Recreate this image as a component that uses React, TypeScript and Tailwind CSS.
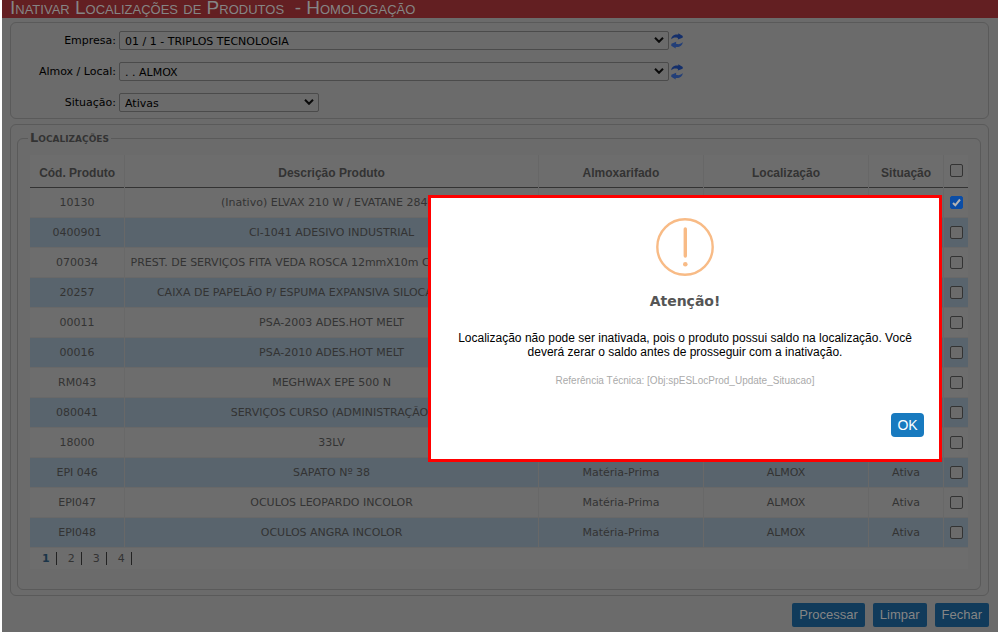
import * as React from "react"
import { clsx } from "clsx"

const products = [
  { code: "10130", name: "(Inativo) ELVAX 210 W / EVATANE 2840B", checked: true },
  { code: "0400901", name: "CI-1041 ADESIVO INDUSTRIAL" },
  { code: "070034", name: "PREST. DE SERVIÇOS FITA VEDA ROSCA 12mmX10m COR BRANCA 50 UN" },
  { code: "20257", name: "CAIXA DE PAPELÃO P/ ESPUMA EXPANSIVA SILOCAV COM 12 UN" },
  { code: "00011", name: "PSA-2003 ADES.HOT MELT" },
  { code: "00016", name: "PSA-2010 ADES.HOT MELT" },
  { code: "RM043", name: "MEGHWAX EPE 500 N" },
  { code: "080041", name: "SERVIÇOS CURSO (ADMINISTRAÇÃO)" },
  { code: "18000", name: "33LV" },
  { code: "EPI 046", name: "SAPATO Nº 38" },
  { code: "EPI047", name: "OCULOS LEOPARDO INCOLOR" },
  { code: "EPI048", name: "OCULOS ANGRA INCOLOR" },
]

const columns = ["Cód. Produto", "Descrição Produto", "Almoxarifado", "Localização", "Situação"]
const pages = ["1", "2", "3", "4"]
const actions = ["Processar", "Limpar", "Fechar"]

function RefreshIcon() {
  return (
    <svg viewBox="0 0 12 16" className="block h-4 w-3" aria-hidden="true">
      <path d="M0.3 6.2C0.4 3 3.2 1.2 7.4 1.6L7.2 0.2 11.8 3 11.6 4.8 6.8 6.6 7 4.9C4.2 4 2 4.4 0.3 6.2Z" fill="#142f6b" />
      <path d="M11.7 9C11.5 12.6 8.8 14.4 4.6 14L4.8 15.6 0.2 12.8 0.4 10.8 5.2 8.8 5 10.8C7.8 11.6 10 11 11.7 9Z" fill="#233f78" />
    </svg>
  )
}

function SelectField({
  id,
  label,
  value,
  className,
  refresh,
}: {
  id: string
  label: string
  value: string
  className: string
  refresh?: boolean
}) {
  return (
    <div className="flex items-center">
      <label htmlFor={id} className="w-[108px] pt-[2px] pr-[3px] text-right">
        {label}
      </label>
      <div className={clsx("relative", className)}>
        <select
          id={id}
          className="block h-[19px] w-full appearance-none rounded-xs border border-[#4b4b4b] bg-[#6b6b6b] pt-[2px] pr-5 pl-[5px] text-black"
        >
          <option>{value}</option>
        </select>
        <svg viewBox="0 0 10 6" className="pointer-events-none absolute top-[6px] right-[5px] h-[6px] w-[10px]" aria-hidden="true">
          <path d="M1 0.8 5 4.8 9 0.8" fill="none" stroke="#0a0a0a" strokeWidth="2" />
        </svg>
      </div>
      {refresh && (
        <button type="button" aria-label={`Atualizar ${label}`} className="ml-[2px]">
          <RefreshIcon />
        </button>
      )}
    </div>
  )
}

function Check({ label, checked }: { label: string; checked?: boolean }) {
  return (
    <span className="relative mx-auto block size-[13px]">
      <input
        type="checkbox"
        aria-label={label}
        defaultChecked={checked}
        className="peer block size-[13px] appearance-none rounded-xs border border-[#333333] bg-[#6b6b6b] checked:border-[#0b4da6] checked:bg-[#0b4da6]"
      />
      <svg viewBox="0 0 13 13" className="pointer-events-none absolute inset-0 hidden size-[13px] peer-checked:block" aria-hidden="true">
        <path d="M3 7 5.3 9.3 10 3.5" fill="none" stroke="#b4b4b4" strokeWidth="2" />
      </svg>
    </span>
  )
}

function ProductTable() {
  return (
    <table className="w-full table-fixed border-collapse text-center text-[#333333]">
      <colgroup>
        <col className="w-[10.1%]" />
        <col className="w-[44.1%]" />
        <col className="w-[17.6%]" />
        <col className="w-[17.6%]" />
        <col className="w-[8%]" />
        <col className="w-[2.6%]" />
      </colgroup>
      <thead>
        <tr className="h-8 border-b border-[#333333] font-['Liberation_Sans',sans-serif] text-xs">
          {columns.map((column) => (
            <th key={column} className="border-r border-r-[#676767] pt-[5px] font-bold">
              {column}
            </th>
          ))}
          <th>
            <Check label="Selecionar todos" />
          </th>
        </tr>
      </thead>
      <tbody>
        {products.map((product) => (
          <tr key={product.code} className="h-[30px] border-b border-[#686868] whitespace-nowrap even:bg-[#59646d]">
            <td className="border-r border-[#686868] pt-[2px]">{product.code}</td>
            <td className="overflow-hidden border-r border-[#686868] pt-[2px]">{product.name}</td>
            <td className="border-r border-[#686868] pt-[2px]">Matéria-Prima</td>
            <td className="border-r border-[#686868] pt-[2px]">ALMOX</td>
            <td className="border-r border-[#686868] pt-[2px]">Ativa</td>
            <td>
              <Check label={`Selecionar ${product.code}`} checked={product.checked} />
            </td>
          </tr>
        ))}
      </tbody>
    </table>
  )
}

function Alert({ onClose }: { onClose: () => void }) {
  return (
    <div
      role="alertdialog"
      aria-labelledby="alert-title"
      className="absolute top-[195px] right-14 w-[514px] border-3 border-[#ff0000] bg-white px-[15px] pt-5 pb-[22px] text-center"
    >
      <svg viewBox="0 0 58 58" className="mx-auto size-[58px]" fill="none" stroke="#f8bb86" aria-hidden="true">
        <circle cx="29" cy="29" r="27.7" strokeWidth="2.4" />
        <path d="M29.3 11V38" strokeWidth="3.4" strokeLinecap="round" />
        <circle cx="29.3" cy="46.3" r="2.3" fill="#f8bb86" stroke="none" />
      </svg>
      <h2 id="alert-title" className="mt-[15px] text-sm leading-5 font-bold text-[#555555]">
        Atenção!
      </h2>
      <p className="mt-5 font-['Liberation_Sans',sans-serif] text-xs leading-[14px] text-black">
        Localização não pode ser inativada, pois o produto possui saldo na localização. Você
        <br />
        deverá zerar o saldo antes de prosseguir com a inativação.
      </p>
      <p className="mt-4 font-['Liberation_Sans',sans-serif] text-[10px] leading-3 text-[#aaaaaa]">
        Referência Técnica: [Obj:spESLocProd_Update_Situacao]
      </p>
      <div className="mt-[26px] flex justify-end">
        <button
          type="button"
          onClick={onClose}
          className="h-6 w-[33px] rounded bg-[#187abf] font-['Liberation_Sans',sans-serif] text-sm text-white"
        >
          OK
        </button>
      </div>
    </div>
  )
}

export default function App() {
  const [open, setOpen] = React.useState(true)

  return (
    <div className="relative min-h-screen border-l-2 border-white bg-[#6b6b6b] font-['DejaVu_Sans',sans-serif] text-[11px] text-black">
      <header className="flex h-[18px] items-center bg-[#631f22] pb-[3px] pl-2">
        <h1 className="font-['Liberation_Sans',sans-serif] text-[19px] leading-4 whitespace-pre text-[#858585] [font-variant-caps:small-caps]">
          Inativar Localizações de Produtos{"  "}- Homologação
        </h1>
      </header>

      <main className="pt-1 pr-[9px] pl-2">
        <section className="flex h-[97px] flex-col gap-3 rounded-md border border-[#5a5a5a] pt-2">
          <SelectField id="empresa" label="Empresa:" value="01 / 1 - TRIPLOS TECNOLOGIA" className="w-[550px]" refresh />
          <SelectField id="almox" label="Almox / Local:" value=". . ALMOX" className="w-[550px]" refresh />
          <SelectField id="situacao" label="Situação:" value="Ativas" className="w-[200px]" />
        </section>

        <section className="mt-[5px] rounded-md border border-[#5a5a5a] pt-[5px] pr-[7px] pb-[5px] pl-[6px]">
          <fieldset className="rounded-md border border-[#5a5a5a] px-3 pb-5">
            <legend className="-ml-[2px] px-[2px] text-[13px] leading-4 font-bold text-[#333333] [font-variant-caps:small-caps]">
              Localizações
            </legend>
            <div className="mt-[9px] bg-[#6d6d6d]">
              <ProductTable />
              <nav className="flex h-[21px] items-center pl-3" aria-label="Páginas">
                {pages.map((page, i) => (
                  <a
                    key={page}
                    href="#"
                    className={clsx(
                      "mr-[11px] border-r border-[#222222] pr-[6px] leading-[13px]",
                      i === 0 ? "font-bold text-[#1b3549]" : "text-[#333333]"
                    )}
                  >
                    {page}
                  </a>
                ))}
              </nav>
            </div>
          </fieldset>
        </section>

        <footer className="flex justify-end gap-2 pt-[7px]">
          {actions.map((action) => (
            <button
              key={action}
              type="button"
              className="h-6 rounded-xs bg-[#113b5b] px-[7px] font-['Liberation_Sans',sans-serif] text-[13px] text-[#858585]"
            >
              {action}
            </button>
          ))}
        </footer>
      </main>

      {open && <Alert onClose={() => setOpen(false)} />}
    </div>
  )
}
